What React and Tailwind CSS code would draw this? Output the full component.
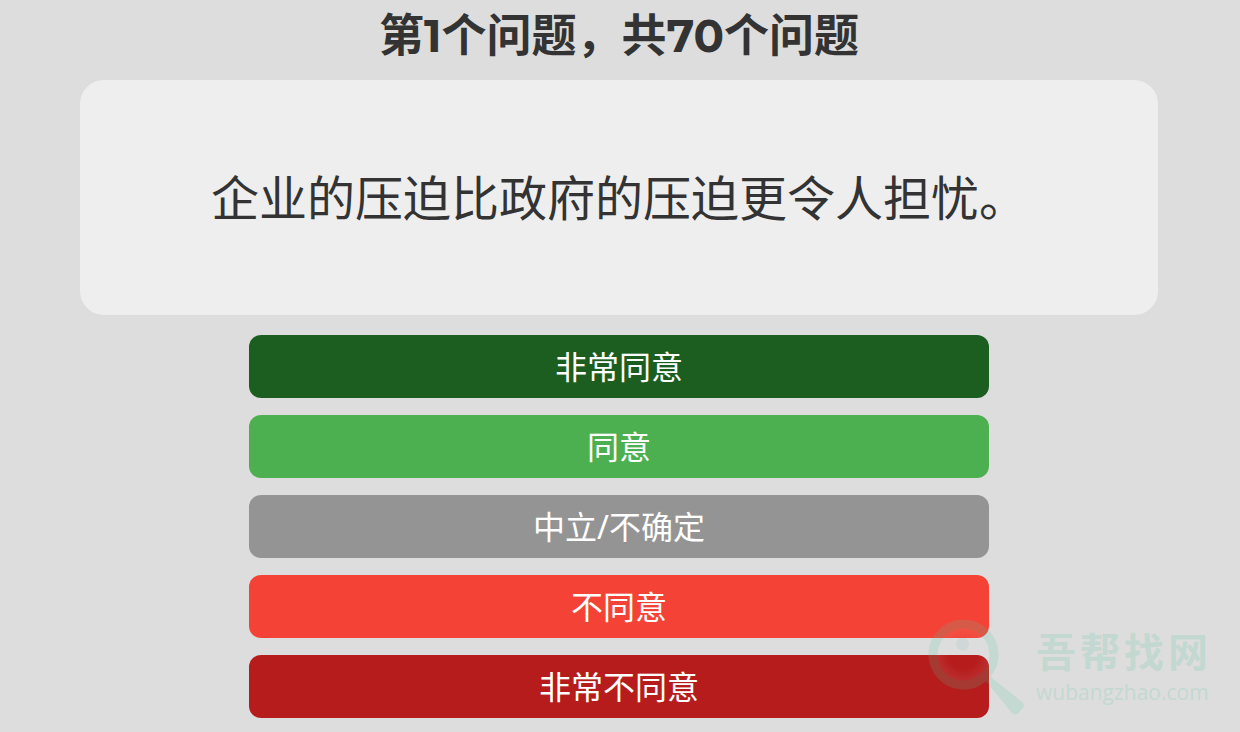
import React from "react";

const answers = [
  { label: "非常同意", color: "bg-[#1b5e20]" },
  { label: "同意", color: "bg-[#4caf50]" },
  { label: "中立/不确定", color: "bg-[#949494]" },
  { label: "不同意", color: "bg-[#f44336]" },
  { label: "非常不同意", color: "bg-[#b71c1c]" },
];

function Watermark() {
  return (
    <div className="pointer-events-none absolute right-7 bottom-4 flex items-start gap-3 text-[#4dc69a]">
      <svg className="h-24 w-24" viewBox="0 0 96 96" fill="none" aria-hidden="true">
        <defs>
          <radialGradient id="lens">
            <stop offset="0.55" stopColor="#ddd" stopOpacity="0" />
            <stop offset="1" stopColor="#ddd" stopOpacity="0.09" />
          </radialGradient>
        </defs>
        <circle cx="35.500" cy="34.500" r="26" fill="url(#lens)" />
        <path
          fill="currentColor"
          fillRule="evenodd"
          opacity="0.18"
          d="M35.500 -0.500 A35 35 0 0 1 62.500 56.800 L94 82 Q97.500 85 94.500 88.500 L90.500 93 Q87 96 83.500 92.500 L58 61.300 A35 35 0 1 1 35.500 -0.500 Z M35.500 8.500 A26 26 0 1 0 35.500 60.500 A26 26 0 1 0 35.500 8.500 Z"
        />
        <circle cx="34.500" cy="24" r="6.500" fill="#8fb8bb" opacity="0.16" />
      </svg>
      <div className="flex flex-col pt-2 opacity-[0.18]">
        <span className="text-[40px] leading-12 font-bold tracking-widest">吾帮找网</span>
        <span className="font-['Open_Sans'] text-[21px] leading-8">wubangzhao.com</span>
      </div>
    </div>
  );
}

export default function App() {
  return (
    <main className="relative min-h-screen bg-[#dddddd] pr-[82px] pb-3 pl-20 font-['Noto_Sans','Noto_Sans_CJK_SC',sans-serif] text-[#333333]">
      <h1 className="pt-1 text-center font-['Montserrat','Noto_Sans_CJK_SC',sans-serif] text-[45px] leading-[64px] font-bold">
        第1个问题，共70个问题
      </h1>
      <section className="mt-3 flex h-[235px] items-center justify-center rounded-3xl bg-[#eeeeee]">
        <p className="text-[48px] leading-[70px]">企业的压迫比政府的压迫更令人担忧。</p>
      </section>
      <div className="mx-auto mt-5 flex max-w-[740px] flex-col gap-[17px]">
        {answers.map((a) => (
          <button key={a.label} type="button" className={`h-[63px] rounded-xl text-[32px] text-white ${a.color}`}>
            {a.label}
          </button>
        ))}
      </div>
      <Watermark />
    </main>
  );
}
